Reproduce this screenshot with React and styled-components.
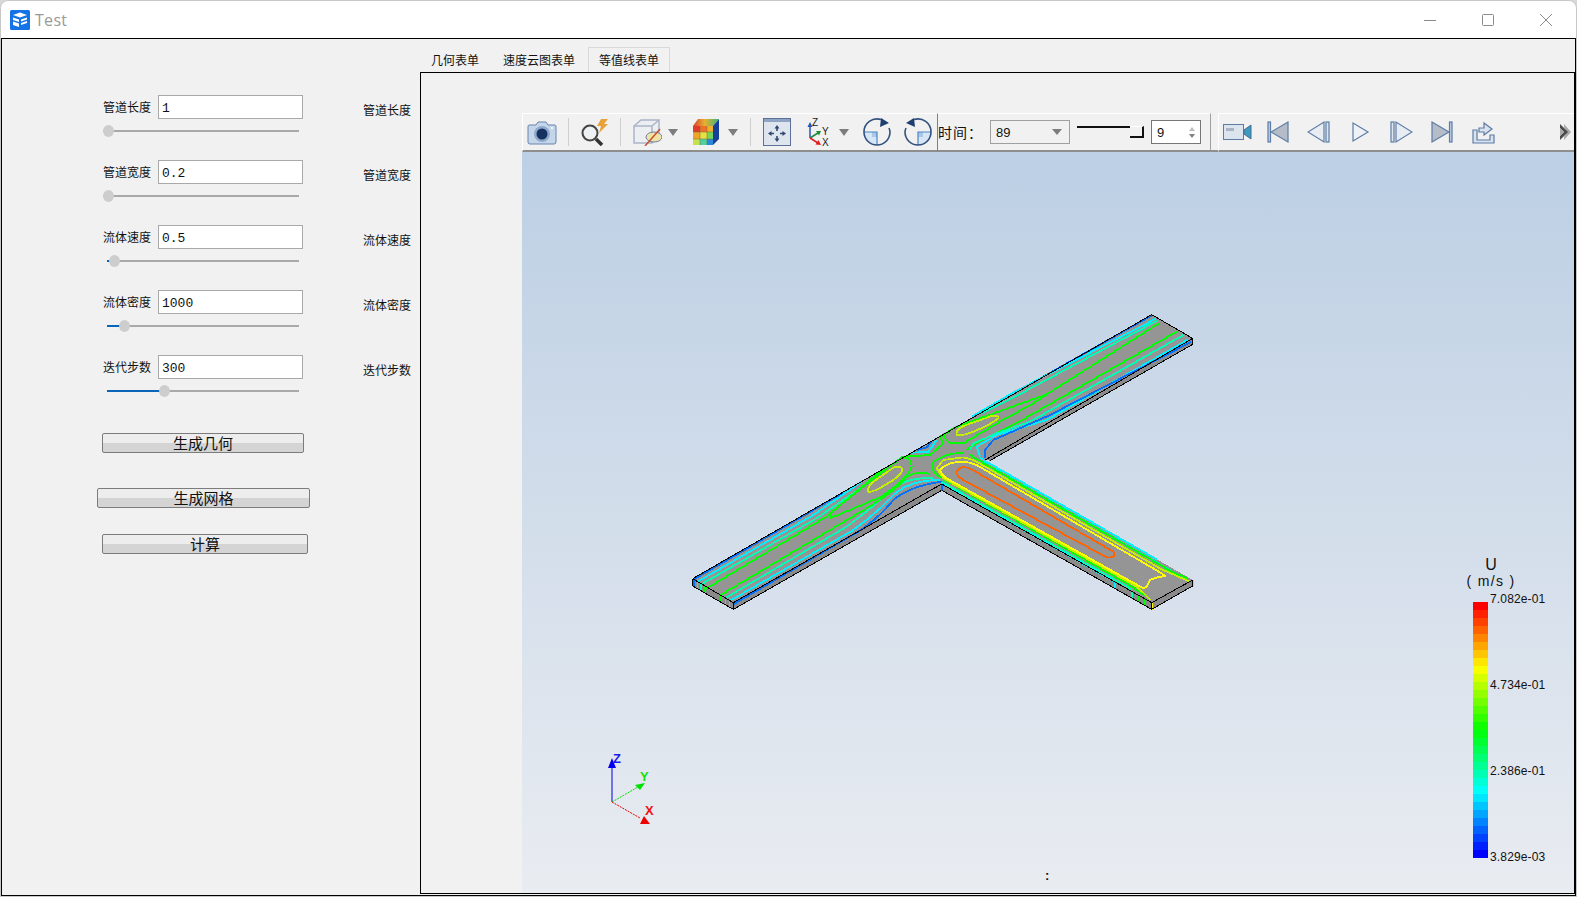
import React from "react";
import styled, { createGlobalStyle } from "styled-components";

const CJK = `"Noto Sans CJK SC", "Liberation Sans", sans-serif`;

const GlobalStyle = createGlobalStyle`
  html, body {
    margin: 0;
    padding: 0;
    background: #d8d8d8;
    overflow: hidden;
  }
  * {
    box-sizing: border-box;
  }
`;

const Window = styled.div`
  width: 1577px;
  height: 897px;
  display: flex;
  flex-direction: column;
  background: #fff;
  border: 1px solid #c9c9c9;
  border-radius: 8px 8px 0 0;
  font-family: ${CJK};
  color: #111;
`;

const TitleBar = styled.div`
  height: 37px;
  flex: none;
  display: flex;
  align-items: center;
  padding: 0 0 0 9px;
`;

const TitleText = styled.span`
  margin-left: 5px;
  font: 16px "Open Sans", "Liberation Sans", sans-serif;
  letter-spacing: 0.3px;
  color: #9a9a9a;
`;

const WindowControls = styled.div`
  margin-left: auto;
  display: flex;
  align-items: center;
  padding-right: 24px;
  gap: 46px;
`;

const Main = styled.div`
  flex: none;
  height: 858px;
  display: flex;
  background: #f1f1f1;
  border: 1px solid #000;
`;

const Sidebar = styled.div`
  width: 418px;
  flex: none;
  padding: 56px 0 0 101px;
`;

const Field = styled.div`
  height: 65px;
`;

const FieldRow = styled.div`
  display: flex;
  align-items: center;
  height: 24px;
`;

const FieldLabel = styled.label`
  width: 55px;
  font-size: 12px;
  line-height: 16px;
`;

const ValueInput = styled.div`
  width: 145px;
  height: 24px;
  padding: 1px 0 0 3px;
  background: #fff;
  border: 1px solid #a9a9a9;
  font: 13px/23px "Liberation Mono", monospace;
`;

const SideLabel = styled.span`
  margin: 6px 0 0 60px;
  font-size: 12px;
  line-height: 16px;
`;

const SliderTrack = styled.div`
  position: relative;
  width: ${(p) => 196 - p.$inset}px;
  height: 2px;
  margin: 11px 0 0 ${(p) => p.$inset}px;
  background: #a9a9a9;
`;

const SliderFill = styled.div`
  height: 2px;
  width: ${(p) => p.$pos}px;
  background: #0a64b8;
`;

const SliderHandle = styled.div`
  position: absolute;
  top: -5px;
  left: ${(p) => p.$pos - 5.5}px;
  width: 11px;
  height: 12px;
  border-radius: 50%;
  background: #cdcdcd;
`;

const PushButton = styled.button`
  display: block;
  width: ${(p) => p.$w}px;
  height: 20px;
  margin: ${(p) => p.$top}px 0 0 ${(p) => p.$left}px;
  padding: 0;
  border: 1px solid #7c7c7c;
  border-radius: 2px;
  background: linear-gradient(#ededed 0 50%, #d4d4d4 50% 100%);
  font-family: ${CJK};
  font-size: 15px;
  line-height: 18px;
  color: #111;
`;

const TabWidget = styled.div`
  flex: 1;
  min-width: 0;
  display: flex;
  flex-direction: column;
  padding: 8px 0 1px;
`;

const TabBar = styled.div`
  height: 25px;
  flex: none;
  display: flex;
  margin-left: -1px;
`;

const Tab = styled.div`
  height: 25px;
  padding: 0 12px;
  font-size: 12px;
  line-height: 25px;
  ${(p) =>
    p.$active &&
    `
    margin-left: 1px;
    padding: 0 10px;
    background: #f1f1f1;
    border: 1px solid #d9d9d9;
    border-bottom: 0;
    line-height: 24px;
  `}
`;

const Pane = styled.div`
  flex: 1;
  min-height: 0;
  display: flex;
  flex-direction: column;
  padding: 40px 0 0 101px;
  background: #f1f1f1;
  border: 1px solid #000;
`;

const ToolArea = styled.div`
  height: 39px;
  flex: none;
  display: flex;
`;

const ToolBar = styled.div`
  flex: ${(p) => (p.$grow ? 1 : "none")};
  display: flex;
  align-items: center;
  background: #f1f1f1;
  border-top: 1px solid #fff;
  border-left: 1px solid #fff;
  border-bottom: 2px solid #8e8e8e;
`;

const Slot = styled.div`
  flex: none;
  width: ${(p) => p.$w}px;
  margin-left: ${(p) => p.$ml || 0}px;
  display: flex;
  justify-content: center;
  align-items: center;
`;

const Separator = styled.div`
  width: 1px;
  height: 28px;
  background: #cfcfcf;
`;

const TimeControls = styled.div`
  flex: none;
  width: 274px;
  display: flex;
  align-items: center;
  border-top: 1px solid #fff;
  border-bottom: 2px solid #8e8e8e;
  border-left: 1px solid #808080;
  border-right: 1px solid #a0a0a0;
`;

const TimeLabel = styled.span`
  width: 52px;
  font-size: 14px;
  letter-spacing: 1px;
  line-height: 36px;
  white-space: nowrap;
`;

const Combo = styled.div`
  width: 80px;
  height: 24px;
  padding-left: 5px;
  display: flex;
  align-items: center;
  justify-content: space-between;
  padding-right: 7px;
  border: 1px solid #a0a0a0;
  background: #f1f1f1;
  font: 13px "Liberation Sans", sans-serif;
`;

const ArrowDown = styled.span`
  width: 0;
  height: 0;
  border-left: 5px solid transparent;
  border-right: 5px solid transparent;
  border-top: 6px solid #7d7d7d;
`;

const TimeSlider = styled.div`
  position: relative;
  width: 67px;
  height: 24px;
  margin-left: 7px;
`;

const TimeLine = styled.div`
  position: absolute;
  top: 6px;
  left: 0;
  right: 0;
  height: 2px;
  background: #111;
`;

const TimeThumb = styled.div`
  position: absolute;
  top: 6px;
  right: 0;
  width: 14px;
  height: 12px;
  background: #f1f1f1;
  border-right: 2px solid #111;
  border-bottom: 2px solid #111;
  border-top: 1px solid #fff;
`;

const SpinBox = styled.div`
  width: 50px;
  height: 24px;
  margin-left: 7px;
  padding: 0 5px;
  display: flex;
  align-items: center;
  justify-content: space-between;
  background: #fff;
  border: 1px solid #777;
  font: 13px "Liberation Sans", sans-serif;
`;

const SpinArrows = styled.div`
  display: flex;
  flex-direction: column;
  gap: 3px;
`;

const SpinUp = styled.span`
  display: block;
  border-left: 3px solid transparent;
  border-right: 3px solid transparent;
  border-bottom: 4px solid #bdbdbd;
`;

const SpinDown = styled.span`
  display: block;
  border-left: 3px solid transparent;
  border-right: 3px solid transparent;
  border-top: 4px solid #808080;
`;

const ToolGap = styled.div`
  width: 7px;
  flex: none;
  border-bottom: 2px solid #8e8e8e;
`;

const Viewport = styled.div`
  position: relative;
  flex: 1;
  min-height: 0;
  background: linear-gradient(#bccfe4, #e9ecf1);
`;

const PipeCanvas = styled.svg`
  position: absolute;
  left: 158px;
  top: 148px;
`;

const AxesCanvas = styled.svg`
  position: absolute;
  left: 58px;
  top: 578px;
`;

const Colon = styled.span`
  position: absolute;
  left: 523px;
  top: 716px;
  font: bold 13px "Liberation Sans", sans-serif;
`;

const Legend = styled.div`
  position: absolute;
  left: 928px;
  top: 404px;
  width: 110px;
  font-family: "Liberation Sans", sans-serif;
`;

const LegendTitle = styled.div`
  width: 80px;
  margin-left: 1px;
  text-align: center;
  font-size: ${(p) => p.$size}px;
  line-height: 17px;
  letter-spacing: ${(p) => p.$track}px;
`;

const LegendBody = styled.div`
  display: flex;
  margin: 12px 0 0 23px;
`;

const ColorBar = styled.div`
  width: 15px;
  height: 256px;
  display: flex;
  flex-direction: column;
`;

const ColorBand = styled.div`
  flex: 1;
`;

const LegendTicks = styled.div`
  height: 272px;
  margin: -10px 0 0 2px;
  display: flex;
  flex-direction: column;
  justify-content: space-between;
  font-size: 12px;
  line-height: 14px;
  letter-spacing: 0.15px;
`;

const fields = [
  { label: "管道长度", value: "1", inset: 0, pos: 5 },
  { label: "管道宽度", value: "0.2", inset: 0, pos: 5 },
  { label: "流体速度", value: "0.5", inset: 4, pos: 7 },
  { label: "流体密度", value: "1000", inset: 4, pos: 17 },
  { label: "迭代步数", value: "300", inset: 4, pos: 57 },
];

const bands = Array.from({ length: 32 }, (_, i) => `hsl(${(i * 240) / 31}, 100%, 50%)`);

const BLUE = "#0070ff";
const CYAN = "#00f0ff";
const TEAL = "#00ffb4";
const GREEN = "#00ff00";
const LIME = "#c4f000";
const YELLOW = "#ffff00";
const ORANGE = "#ff6400";

const contours = [
  // main arm, far edge
  [BLUE, "M42 838 L490 578"],
  [BLUE, "M955 306 L1416 46"],
  [CYAN, "M53 845 L400 645 L550 542"],
  [CYAN, "M875 350 L1010 272 L1428 56"],
  [TEAL, "M62 854 L410 655 L560 552"],
  [TEAL, "M905 340 L1020 282 L1432 62"],
  [GREEN, "M75 868 L440 650 L600 515 L670 472"],
  [GREEN, "M830 380 L1100 283 L1440 68"],
  // main arm, near edge
  [BLUE, "M160 913 L540 692 Q600 650 640 600 Q690 558 785 545"],
  [CYAN, "M147 904 L520 690 Q590 640 640 585 Q690 540 780 540"],
  [TEAL, "M135 895 L500 680 Q570 630 630 572 Q680 530 760 535"],
  [GREEN, "M122 885 L560 625 Q650 570 680 530 Q710 512 750 522"],
  [GREEN, "M450 655 L600 592 Q680 540 695 500 Q695 472 665 472 L560 552 L450 640 Z"],
  [LIME, "M565 575 Q562 560 580 545 L640 503 Q665 495 668 510 Q660 530 620 552 Q580 578 565 575 Z"],
  // junction, top notch
  [BLUE, "M712 450 L740 442 L755 425"],
  [CYAN, "M695 458 L745 456 L770 420"],
  [GREEN, "M670 470 L750 465 L790 430 L780 410 L830 380"],
  // right arm lobes
  [GREEN, "M790 410 Q800 395 830 380 L1100 283 L1060 310 L960 365 L850 430 L810 430 Z"],
  [LIME, "M830 405 Q825 392 850 378 L935 348 Q960 345 955 355 Q930 375 880 395 Q840 410 830 405 Z"],
  [GREEN, "M1490 95 L1000 375 Q880 430 860 450"],
  [TEAL, "M1510 105 L1050 365 L950 400 L880 430 L870 450"],
  [CYAN, "M1525 118 L1100 360 L950 405 L890 440 L900 470"],
  [BLUE, "M1533 126 L1110 345 L940 420 L915 450 L915 475"],
  // branch, near edge
  [CYAN, "M785 550 L1305 846"],
  [TEAL, "M785 545 L1355 868"],
  [GREEN, "M850 458 Q790 460 755 490 Q755 510 770 525 L1350 856 L1400 890"],
  [LIME, "M850 472 L790 480 L770 505 L790 535 L1370 860 L1412 900"],
  // branch, far edge
  [CYAN, "M900 474 L1430 778"],
  [TEAL, "M905 485 L1490 822"],
  [GREEN, "M870 465 L915 492 L1470 812 L1520 835"],
  [LIME, "M850 472 L880 480 L925 505 L1445 808 L1530 845"],
  [YELLOW, "M850 485 Q800 485 780 510 Q785 525 800 535 L1390 865 Q1400 865 1410 840 Q1430 830 1455 828 L1445 820 L890 495 Q870 486 850 485 Z"],
  [ORANGE, "M830 515 Q840 495 870 505 L1300 755 Q1312 775 1280 772 L850 540 Q825 525 830 515 Z"],
];

const ticks = [
  [BLUE, 42, 840],
  [CYAN, 52, 846],
  [TEAL, 62, 852],
  [GREEN, 75, 860],
  [GREEN, 122, 887],
  [TEAL, 136, 895],
  [CYAN, 148, 902],
  [BLUE, 160, 910],
  [BLUE, 785, 554],
  [CYAN, 1305, 847],
  [TEAL, 1355, 876],
  [GREEN, 1375, 887],
  [GREEN, 1395, 898],
  [YELLOW, 1415, 910],
  [LIME, 1538, 840],
];

const PipeModel = () => (
  <PipeCanvas width="520" height="320" viewBox="0 0 1560 960" shapeRendering="crispEdges" fill="none">
    <polygon
      fill="#8a8a8a"
      points="38,836 160,908 785,552 1415,908 1538,840 1538,858 1415,928 787,572 160,928 38,858"
    />
    <polygon fill="#8a8a8a" points="915,480 1538,115 1538,133 930,482" />
    <polygon
      fill="#959595"
      points="38,836 1415,44 1538,115 915,480 1538,840 1415,908 785,552 160,908"
    />
    {contours.map(([color, d], i) => (
      <path key={i} d={d} stroke={color} strokeWidth="5.5" strokeLinejoin="round" />
    ))}
    {ticks.map(([color, x, y], i) => (
      <line key={i} x1={x} y1={y} x2={x} y2={y + 20} stroke={color} strokeWidth="5" />
    ))}
    <g stroke="#000" strokeWidth="3">
      <path d="M38 836 L1415 44 L1538 115 L915 480 M1538 840 L1415 908 L785 552 L160 908 L38 836" />
      <path d="M38 836 V858 L160 928 V908 M160 928 L783 572" />
      <path d="M787 572 L1415 928 V908 M1415 928 L1538 858 V840" />
      <path d="M930 482 L1538 133 V115" />
    </g>
  </PipeCanvas>
);

const AxesWidget = () => (
  <AxesCanvas width="100" height="100" viewBox="0 0 100 100" fontFamily="Liberation Sans, sans-serif" fontWeight="bold" fontSize="13">
    <line x1="32" y1="72" x2="32" y2="36" stroke="#0000e0" strokeWidth="1" />
    <polygon points="32,28 28,38 36,38" fill="#0000f0" />
    <line x1="32" y1="72" x2="58" y2="57" stroke="#00e000" strokeWidth="1" strokeDasharray="2 1" />
    <polygon points="65,53 55,55 60,60" fill="#00e000" />
    <line x1="32" y1="72" x2="60" y2="88" stroke="#e00000" strokeWidth="1" strokeDasharray="2 1" />
    <polygon points="70,94 60,94 64,86" fill="#f00000" />
    <text x="33" y="33" fill="#1a1af0">Z</text>
    <text x="60" y="51" fill="#10e010">Y</text>
    <text x="65" y="85" fill="#f01010">X</text>
  </AxesCanvas>
);

const AppLogo = () => (
  <svg width="20" height="20" viewBox="0 0 20 20">
    <rect width="20" height="20" rx="1.5" fill="#1473e6" />
    <path d="M3 5 L10 2.5 L17 5 L10 7.5 Z" fill="#fff" />
    <path d="M3 7.5 L9 9.5 V12 L3 10 Z M3 11.5 L9 13.5 V17 L3 15 Z" fill="#fff" />
    <path d="M11 9.5 L17 7.5 V9.5 L11 11.5 Z M11 13 L17 11 V13 L11 15 Z" fill="#fff" />
  </svg>
);

const MinimizeIcon = () => (
  <svg width="12" height="12" viewBox="0 0 12 12">
    <line x1="0" y1="6.5" x2="12" y2="6.5" stroke="#8a8a8a" />
  </svg>
);

const MaximizeIcon = () => (
  <svg width="12" height="12" viewBox="0 0 12 12">
    <rect x="0.5" y="0.5" width="11" height="11" rx="1" fill="none" stroke="#8a8a8a" />
  </svg>
);

const CloseIcon = () => (
  <svg width="12" height="12" viewBox="0 0 12 12">
    <path d="M0 0 L12 12 M12 0 L0 12" stroke="#8a8a8a" />
  </svg>
);

const CameraIcon = () => (
  <svg width="30" height="26" viewBox="0 0 30 26">
    <path d="M2 6 H9 L11 3 H19 L21 6 H28 Q29 6 29 8 V23 Q29 25 27 25 H3 Q1 25 1 23 V8 Q1 6 2 6 Z" fill="#c6d6ea" stroke="#6785ad" />
    <circle cx="15" cy="15" r="8" fill="#8fa9cc" />
    <circle cx="15" cy="15" r="5.5" fill="#16305f" />
    <circle cx="25" cy="9" r="1" fill="#fff" />
  </svg>
);

const MagnifyIcon = () => (
  <svg width="30" height="28" viewBox="0 0 30 28">
    <circle cx="11" cy="15" r="7.5" fill="#eef1f4" stroke="#444" strokeWidth="2" />
    <line x1="17" y1="21" x2="23" y2="27" stroke="#333" strokeWidth="3.5" />
    <path d="M22 1 L29 1 L25 6 L29 6 L20 15 L22 8 L18 8 Z" fill="#e9a23b" />
  </svg>
);

const CubeIcon = () => (
  <svg width="30" height="28" viewBox="0 0 30 28">
    <path d="M2 8 L9 2 H27 V18 L20 25 H2 Z" fill="#eceef2" stroke="#aab4c6" strokeWidth="1.5" />
    <path d="M2 8 H20 V25 M20 8 L27 2" fill="none" stroke="#aab4c6" strokeWidth="1.5" />
    <ellipse cx="22" cy="19" rx="8" ry="5" fill="#efe3a6" stroke="#6d7f9c" />
    <line x1="13" y1="28" x2="28" y2="11" stroke="#c8502c" strokeWidth="1.5" />
  </svg>
);

const RainbowCubeIcon = () => (
  <svg width="28" height="28" viewBox="0 0 28 28">
    <defs>
      <linearGradient id="cubeTop" x1="0" y1="0" x2="1" y2="0">
        <stop offset="0" stopColor="#d8402c" />
        <stop offset="0.45" stopColor="#e8b030" />
        <stop offset="1" stopColor="#38b878" />
      </linearGradient>
    </defs>
    <path d="M6 1 H27 L21 8 H1 Z" fill="url(#cubeTop)" />
    <path d="M21 8 L27 1 V21 L21 27 Z" fill="#17409a" />
    <rect x="1" y="8" width="7" height="6" fill="#e03a2a" />
    <rect x="8" y="8" width="7" height="6" fill="#f0702a" />
    <rect x="15" y="8" width="6" height="6" fill="#f2b02a" />
    <rect x="1" y="14" width="7" height="7" fill="#f0a22a" />
    <rect x="8" y="14" width="7" height="7" fill="#e8e040" />
    <rect x="15" y="14" width="6" height="7" fill="#74d65c" />
    <rect x="1" y="21" width="7" height="6" fill="#c8e04a" />
    <rect x="8" y="21" width="7" height="6" fill="#50d0a0" />
    <rect x="15" y="21" width="6" height="6" fill="#2a88d8" />
    <path d="M1 14 H21 M1 21 H21 M8 8 V27 M15 8 V27" stroke="#6f6f40" strokeWidth="0.5" />
  </svg>
);

const DropArrow = () => (
  <svg width="10" height="7" viewBox="0 0 10 7">
    <path d="M0 0 H10 L5 7 Z" fill="#7d7d7d" />
  </svg>
);

const FitIcon = () => (
  <svg width="28" height="28" viewBox="0 0 28 28">
    <rect x="0.5" y="0.5" width="27" height="27" fill="#dfe5ef" stroke="#5b7199" />
    <rect x="1" y="1" width="26" height="3" fill="#8fa3c4" />
    <path d="M14 7 L11.5 10.5 H13.2 V13 H14.8 V10.5 H16.5 Z M14 24 L11.5 20.5 H13.2 V18 H14.8 V20.5 H16.5 Z M5 15.5 L8.5 13 V14.7 H11 V16.3 H8.5 V18 Z M23 15.5 L19.5 13 V14.7 H17 V16.3 H19.5 V18 Z" fill="#2f476f" />
  </svg>
);

const AxesIcon = () => (
  <svg width="24" height="30" viewBox="0 0 24 30" fontFamily="Liberation Sans, sans-serif" fontSize="10">
    <path d="M3 8 V21" stroke="#2b54b8" strokeWidth="1.5" />
    <path d="M3 5 L0.5 10 H5.5 Z" fill="#2b54b8" />
    <path d="M3 21 L11 16" stroke="#1c8c3c" strokeWidth="1.5" />
    <path d="M14 14 L9 14 L12 18.5 Z" fill="#1c8c3c" />
    <path d="M3 21 L11 26" stroke="#e02020" strokeWidth="1.5" />
    <path d="M14 28 L8.5 27.5 L11.5 23 Z" fill="#e02020" />
    <text x="5" y="9" fill="#222">Z</text>
    <text x="15" y="18" fill="#222">Y</text>
    <text x="15" y="29" fill="#222">X</text>
  </svg>
);

const RotateIcon = ({ flip }) => (
  <svg width="28" height="28" viewBox="0 0 28 28" style={flip ? { transform: "scaleX(-1)" } : undefined}>
    <path d="M14 14 H1 A13 13 0 0 0 14 27 Z" fill="#d6e6f6" />
    <rect x="9" y="14" width="5" height="5" fill="#a9c8e8" />
    <path d="M1 14 H14 V27" fill="none" stroke="#4f86c0" strokeWidth="1.2" />
    <path d="M18 1.6 A13 13 0 0 0 1 14 A13 13 0 0 0 14 27 A13 13 0 0 0 27 14 A13 13 0 0 0 26 10" fill="none" stroke="#33527f" strokeWidth="1.6" />
    <path d="M18 0 L26 5 L17 9 Z" fill="#1f3f70" />
  </svg>
);

const CamcorderIcon = () => (
  <svg width="30" height="20" viewBox="0 0 30 20">
    <rect x="0.5" y="2.5" width="20" height="15" fill="#dce4ee" stroke="#5d7ca5" />
    <rect x="3" y="6" width="8" height="3" fill="#a9b5c6" />
    <path d="M21 8 L28 3 V17 L21 12 Z" fill="#3b9ac0" stroke="#4a6a95" />
  </svg>
);

const stroke = { stroke: "#5d7ca5", strokeWidth: 1.2 };

const FirstIcon = () => (
  <svg width="24" height="24" viewBox="0 0 24 24">
    <rect x="2" y="2" width="2.5" height="20" fill="#c4d0e0" {...stroke} />
    <path d="M22 2 V22 L5 12 Z" fill="#b4bcc8" {...stroke} />
  </svg>
);

const PrevIcon = () => (
  <svg width="24" height="24" viewBox="0 0 24 24">
    <path d="M17 2 V22 L1 12 Z" fill="#e8edf4" {...stroke} />
    <rect x="19" y="2" width="3" height="20" fill="#dfe6f0" {...stroke} />
  </svg>
);

const PlayIcon = () => (
  <svg width="24" height="24" viewBox="0 0 24 24">
    <path d="M5 3 V21 L20 12 Z" fill="#eef2f7" {...stroke} />
  </svg>
);

const NextIcon = () => (
  <svg width="24" height="24" viewBox="0 0 24 24">
    <rect x="2" y="2" width="3" height="20" fill="#dfe6f0" {...stroke} />
    <path d="M7 2 V22 L23 12 Z" fill="#e8edf4" {...stroke} />
  </svg>
);

const LastIcon = () => (
  <svg width="24" height="24" viewBox="0 0 24 24">
    <path d="M2 2 V22 L19 12 Z" fill="#b4bcc8" {...stroke} />
    <rect x="19.5" y="2" width="2.5" height="20" fill="#c4d0e0" {...stroke} />
  </svg>
);

const ExportIcon = () => (
  <svg width="24" height="24" viewBox="0 0 24 24">
    <path d="M2 10 H6 V20 H19 V15 H23 V23 H2 Z" fill="#d9e2ee" {...stroke} />
    <path d="M8 12 V8 H13 V3 L21 9 L13 15 V12 Z" fill="#d9e2ee" {...stroke} />
  </svg>
);

const ChevronIcon = () => (
  <svg width="12" height="18" viewBox="0 0 12 18">
    <path d="M5 1 L12 9 L5 17 V14 L8 9 L5 4 Z" fill="#a8a8a8" />
    <path d="M1 1 L9 9 L1 17 V13 L5 9 L1 5 Z" fill="#4a4a4a" />
    <path d="M1 5 L5 9 L1 13 Z" fill="#a8a8a8" />
  </svg>
);

const App = () => (
  <>
    <GlobalStyle />
    <Window>
      <TitleBar>
        <AppLogo />
        <TitleText>Test</TitleText>
        <WindowControls>
          <MinimizeIcon />
          <MaximizeIcon />
          <CloseIcon />
        </WindowControls>
      </TitleBar>
      <Main>
        <Sidebar>
          {fields.map((f) => (
            <Field key={f.label}>
              <FieldRow>
                <FieldLabel>{f.label}</FieldLabel>
                <ValueInput>{f.value}</ValueInput>
                <SideLabel>{f.label}</SideLabel>
              </FieldRow>
              <SliderTrack $inset={f.inset}>
                {f.inset > 0 && <SliderFill $pos={f.pos} />}
                <SliderHandle $pos={f.pos} />
              </SliderTrack>
            </Field>
          ))}
          <PushButton $w={202} $top={13} $left={-1}>生成几何</PushButton>
          <PushButton $w={213} $top={35} $left={-6}>生成网格</PushButton>
          <PushButton $w={206} $top={26} $left={-1}>计算</PushButton>
        </Sidebar>
        <TabWidget>
          <TabBar>
            <Tab>几何表单</Tab>
            <Tab>速度云图表单</Tab>
            <Tab $active>等值线表单</Tab>
          </TabBar>
          <Pane>
            <ToolArea>
              <ToolBar>
                <Slot $w={37}><CameraIcon /></Slot>
                <Slot $w={16}><Separator /></Slot>
                <Slot $w={36}><MagnifyIcon /></Slot>
                <Slot $w={16}><Separator /></Slot>
                <Slot $w={38}><CubeIcon /></Slot>
                <Slot $w={14}><DropArrow /></Slot>
                <Slot $w={40} $ml={6}><RainbowCubeIcon /></Slot>
                <Slot $w={14}><DropArrow /></Slot>
                <Slot $w={16} $ml={2}><Separator /></Slot>
                <Slot $w={38}><FitIcon /></Slot>
                <Slot $w={38} $ml={4}><AxesIcon /></Slot>
                <Slot $w={12}><DropArrow /></Slot>
                <Slot $w={38} $ml={8}><RotateIcon /></Slot>
                <Slot $w={38} $ml={3}><RotateIcon flip /></Slot>
              </ToolBar>
              <TimeControls>
                <TimeLabel>时间：</TimeLabel>
                <Combo>89<ArrowDown /></Combo>
                <TimeSlider>
                  <TimeLine />
                  <TimeThumb />
                </TimeSlider>
                <SpinBox>
                  9
                  <SpinArrows>
                    <SpinUp />
                    <SpinDown />
                  </SpinArrows>
                </SpinBox>
              </TimeControls>
              <ToolGap />
              <ToolBar $grow>
                <Slot $w={38}><CamcorderIcon /></Slot>
                <Slot $w={41}><FirstIcon /></Slot>
                <Slot $w={41}><PrevIcon /></Slot>
                <Slot $w={41}><PlayIcon /></Slot>
                <Slot $w={41}><NextIcon /></Slot>
                <Slot $w={41}><LastIcon /></Slot>
                <Slot $w={41}><ExportIcon /></Slot>
                <Slot $w={14} $ml={55}><ChevronIcon /></Slot>
              </ToolBar>
            </ToolArea>
            <Viewport>
              <PipeModel />
              <AxesWidget />
              <Colon>:</Colon>
              <Legend>
                <LegendTitle $size={16} $track={0}>U</LegendTitle>
                <LegendTitle $size={14} $track={1.3}>( m/s )</LegendTitle>
                <LegendBody>
                  <ColorBar>
                    {bands.map((color) => (
                      <ColorBand key={color} style={{ background: color }} />
                    ))}
                  </ColorBar>
                  <LegendTicks>
                    <span>7.082e-01</span>
                    <span>4.734e-01</span>
                    <span>2.386e-01</span>
                    <span>3.829e-03</span>
                  </LegendTicks>
                </LegendBody>
              </Legend>
            </Viewport>
          </Pane>
        </TabWidget>
      </Main>
    </Window>
  </>
);

export default App;
